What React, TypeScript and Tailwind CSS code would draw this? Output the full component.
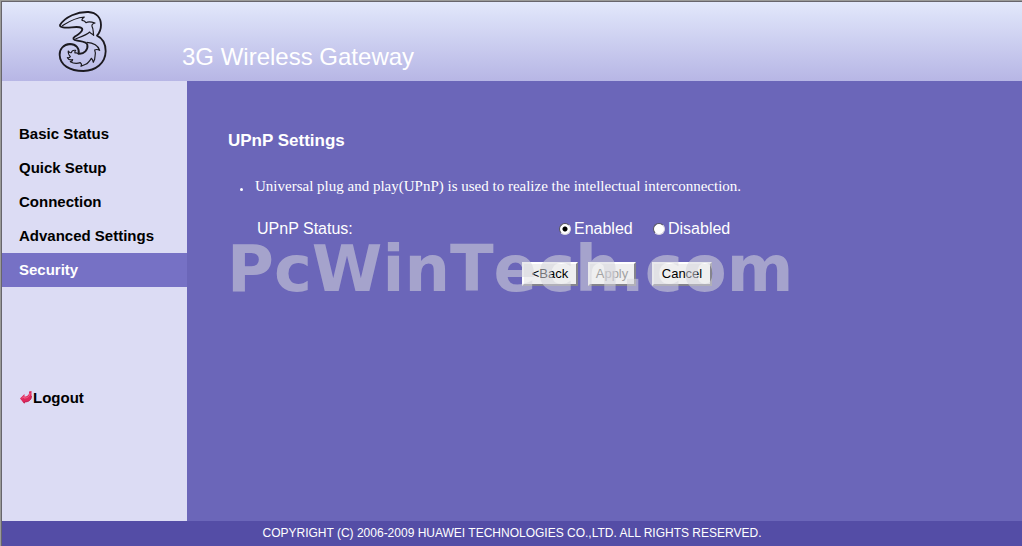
import { useState } from "react";

const NAV_ITEMS = ["Basic Status", "Quick Setup", "Connection", "Advanced Settings", "Security"];

function Logo() {
  return (
    <svg viewBox="54 30 147 189" className="h-[63px] w-[49px]" fill="none" stroke="#1c1a20" strokeLinejoin="round" role="img" aria-label="3">
      <path
        strokeWidth="5.5"
        d="M60 75C76 50 112 35 145 36C170 38 183 54 183 75C183 90 178 99 171 107C188 115 197 132 197 154C196 190 168 212 130 213C90 213 60 196 59 165C58 148 70 133 90 132C108 132 119 146 116 161C132 163 145 149 142 134C139 125 126 125 112 122C99 119 97 115 104 110C116 103 125 98 127 89C127 81 114 80 95 82C75 84 58 83 60 75Z"
      />
      <path
        strokeWidth="3.5"
        d="M66 78C82 68 100 54 133 51C128 54 125 57 126 61C131 61 135 63 138 68C145 64 156 66 165 69C158 71 155 75 156 79C161 87 159 96 161 106C157 101 151 101 149 96C141 105 124 110 106 117"
      />
      <path
        strokeWidth="3.5"
        d="M140 127C158 128 174 135 179 151C173 148 168 148 164 150C169 160 164 169 164 178L160 187C159 182 158 178 154 175C149 183 144 190 137 193L123 199C126 194 125 191 121 188C112 191 101 191 91 185C96 184 98 182 98 179C91 181 86 180 82 173C86 174 89 173 91 170C87 165 83 160 85 153C87 157 90 159 94 158C95 153 101 150 107 151C104 154 103 156 105 159C109 158 114 160 116 163"
      />
    </svg>
  );
}

function LogoutIcon() {
  return (
    <svg viewBox="0 0 13 15" className="h-[15px] w-[13px] shrink-0" aria-hidden="true">
      <path d="M0 7.5L4.500 3V5.500C7.500 5.500 9.500 4 9 0.500L11.500 0V5.500C11.500 9 9 11 4.500 11V13Z" fill="#e0285c" />
      <path d="M2 7.500L4 5.500V7C8 7 10 5 10 2" fill="none" stroke="#f0688c" strokeWidth="1" />
      <path d="M3 10.500L4.500 12V11C8.500 11 11.500 9 11.500 5" fill="none" stroke="#b81c4c" strokeWidth="0.8" />
    </svg>
  );
}

const BUTTON =
  "h-6 border-2 border-t-white border-l-white border-r-[#85848c] border-b-[#85848c] bg-[#efeff0] text-[13px] leading-5 text-black disabled:text-[#a3a3a3]";

const RADIO =
  "m-0 size-3 shrink-0 appearance-none rounded-full border border-t-[#55535f] border-l-[#55535f] border-r-[#d8d6e0] border-b-[#d8d6e0] bg-white checked:bg-[radial-gradient(circle,#000_0_2px,#fff_3px)]";

export default function App() {
  const [status, setStatus] = useState("enabled");

  return (
    <div className="border-t border-l border-[#9b9b98] font-['Liberation_Sans',Arial,sans-serif]">
      <div className="flex min-h-[calc(100vh-1px)] flex-col border-t border-l border-[#67656c]">
        <header className="flex h-[79px] items-end bg-linear-to-b from-[#e2e8fb] to-[#b7b6e5]">
          <div className="flex w-[180px] shrink-0 self-start pt-2 pl-14">
            <Logo />
          </div>
          <h1 className="pb-2 text-2xl leading-8 text-white">3G Wireless Gateway</h1>
        </header>

        <div className="flex grow">
          <aside className="w-[185px] shrink-0 bg-[#dcdcf4] pt-9 text-[15px] font-bold">
            <nav>
              <ul>
                {NAV_ITEMS.map((item) => (
                  <li key={item}>
                    <a
                      href="#"
                      aria-current={item === "Security" ? "page" : undefined}
                      className="flex h-[34px] items-center px-[17px] text-black aria-[current=page]:bg-[#7671c5] aria-[current=page]:text-white"
                    >
                      {item}
                    </a>
                  </li>
                ))}
              </ul>
              <a href="#" className="mt-[94px] flex h-[34px] items-center px-[18px] text-black">
                <LogoutIcon />
                Logout
              </a>
            </nav>
          </aside>

          <main className="relative grow bg-[#6b66b9] px-[41px] pt-12 text-white">
            <h2 className="text-[17px] leading-6 font-bold">UPnP Settings</h2>
            <ul className="mt-[23px] pl-3 font-['Liberation_Serif','Times_New_Roman',serif] text-[15px] leading-5">
              <li className="flex gap-3">
                <span className="mt-3 size-[3px] shrink-0 rounded-full bg-white" />
                Universal plug and play(UPnP) is used to realize the intellectual interconnection.
              </li>
            </ul>
            <form className="mt-[21px] pl-[29px]" onSubmit={(e) => e.preventDefault()}>
              <fieldset className="flex items-center">
                <legend className="float-left w-[302px] leading-6">UPnP Status:</legend>
                <label className="flex w-[94px] items-center gap-[3px] leading-6">
                  <input type="radio" name="upnp" className={RADIO} checked={status === "enabled"} onChange={() => setStatus("enabled")} />
                  Enabled
                </label>
                <label className="flex items-center gap-[3px] leading-6">
                  <input type="radio" name="upnp" className={RADIO} checked={status === "disabled"} onChange={() => setStatus("disabled")} />
                  Disabled
                </label>
              </fieldset>
              <div className="mt-[21px] flex pl-[265px]">
                <button type="button" className={`${BUTTON} w-14`}>&lt;Back</button>
                <button type="submit" disabled className={`${BUTTON} ml-2.5 w-12`}>Apply</button>
                <button type="button" className={`${BUTTON} ml-4 w-[60px]`}>Cancel</button>
              </div>
            </form>
            <div className="pointer-events-none absolute top-[151px] left-10 font-['DejaVu_Sans',Verdana,sans-serif] text-[64px] leading-[75px] font-bold text-[rgba(214,214,220,0.55)] [font-kerning:none]">
              PcWinTech.com
            </div>
          </main>
        </div>

        <footer className="bg-[#544da6] text-center text-xs leading-[25px] text-white">
          COPYRIGHT (C) 2006-2009 HUAWEI TECHNOLOGIES CO.,LTD. ALL RIGHTS RESERVED.
        </footer>
      </div>
    </div>
  );
}
